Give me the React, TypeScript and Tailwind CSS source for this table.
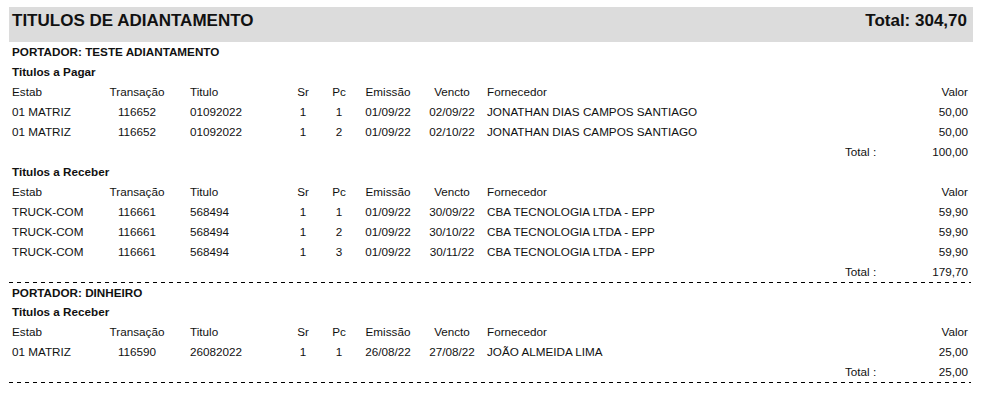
import React from 'react';

type Row = {
  estab: string;
  transacao: string;
  titulo: string;
  sr: string;
  pc: string;
  emissao: string;
  vencto: string;
  fornecedor: string;
  valor: string;
};

type Group = { label: string; rows: Row[]; total: string };
type Portador = { name: string; groups: Group[] };

const portadores: Portador[] = [
  {
    name: 'TESTE ADIANTAMENTO',
    groups: [
      {
        label: 'Titulos a Pagar',
        total: '100,00',
        rows: [
          { estab: '01 MATRIZ', transacao: '116652', titulo: '01092022', sr: '1', pc: '1', emissao: '01/09/22', vencto: '02/09/22', fornecedor: 'JONATHAN DIAS CAMPOS SANTIAGO', valor: '50,00' },
          { estab: '01 MATRIZ', transacao: '116652', titulo: '01092022', sr: '1', pc: '2', emissao: '01/09/22', vencto: '02/10/22', fornecedor: 'JONATHAN DIAS CAMPOS SANTIAGO', valor: '50,00' },
        ],
      },
      {
        label: 'Titulos a Receber',
        total: '179,70',
        rows: [
          { estab: 'TRUCK-COM', transacao: '116661', titulo: '568494', sr: '1', pc: '1', emissao: '01/09/22', vencto: '30/09/22', fornecedor: 'CBA TECNOLOGIA LTDA - EPP', valor: '59,90' },
          { estab: 'TRUCK-COM', transacao: '116661', titulo: '568494', sr: '1', pc: '2', emissao: '01/09/22', vencto: '30/10/22', fornecedor: 'CBA TECNOLOGIA LTDA - EPP', valor: '59,90' },
          { estab: 'TRUCK-COM', transacao: '116661', titulo: '568494', sr: '1', pc: '3', emissao: '01/09/22', vencto: '30/11/22', fornecedor: 'CBA TECNOLOGIA LTDA - EPP', valor: '59,90' },
        ],
      },
    ],
  },
  {
    name: 'DINHEIRO',
    groups: [
      {
        label: 'Titulos a Receber',
        total: '25,00',
        rows: [
          { estab: '01 MATRIZ', transacao: '116590', titulo: '26082022', sr: '1', pc: '1', emissao: '26/08/22', vencto: '27/08/22', fornecedor: 'JOÃO ALMEIDA LIMA', valor: '25,00' },
        ],
      },
    ],
  },
];

const gridCols = 'grid grid-cols-[85px_80px_108px_36px_36px_62px_66px_1fr_80px] h-[20px] leading-[20px]';

const TableRow = ({ row }: { row: Row }) => (
  <div className={gridCols}>
    <span>{row.estab}</span>
    <span className="text-center">{row.transacao}</span>
    <span className="pl-[13px]">{row.titulo}</span>
    <span className="text-center">{row.sr}</span>
    <span className="text-center">{row.pc}</span>
    <span className="text-center">{row.emissao}</span>
    <span className="text-center">{row.vencto}</span>
    <span className="pl-[2px] whitespace-nowrap">{row.fornecedor}</span>
    <span className="text-right">{row.valor}</span>
  </div>
);

const Dashes = () => (
  <div className="-ml-[3px] -mr-[3px] h-px bg-[repeating-linear-gradient(to_right,#000_0_4px,transparent_4px_8px)]" />
);

export default function App() {
  return (
    <div className="min-h-screen bg-white pl-[9px] pr-[8px] pt-[7px] text-[#111] font-['Liberation_Sans',Arial,sans-serif] text-[11.7px]">
      <div className="flex h-[35px] items-start justify-between bg-[#dcdcdc] pl-[3px] pr-[6px] pt-[3px] text-[17px] font-bold leading-[21px]">
        <span>TITULOS DE ADIANTAMENTO</span>
        <span>Total: 304,70</span>
      </div>

      <div className="pl-[3px] pr-[5px]">
        {portadores.map((p, pi) => (
          <div key={p.name}>
            <div className={`font-bold leading-[20px] ${pi === 0 ? 'h-[20px]' : 'h-[19px]'}`}>PORTADOR: {p.name}</div>
            {p.groups.map((g, gi) => (
              <div key={gi}>
                <div className="h-[20px] font-bold leading-[20px]">{g.label}</div>
                <div className={gridCols}>
                  <span>Estab</span>
                  <span className="text-center">Transação</span>
                  <span className="pl-[13px]">Titulo</span>
                  <span className="text-center">Sr</span>
                  <span className="text-center">Pc</span>
                  <span className="text-center">Emissão</span>
                  <span className="text-center">Vencto</span>
                  <span className="pl-[2px]">Fornecedor</span>
                  <span className="text-right">Valor</span>
                </div>
                {g.rows.map((r, ri) => (
                  <TableRow key={ri} row={r} />
                ))}
                <div className="flex h-[20px] justify-end leading-[20px]">
                  <span className="w-[43px]">Total :</span>
                  <span className="w-[80px] text-right">{g.total}</span>
                </div>
              </div>
            ))}
            <Dashes />
          </div>
        ))}
      </div>
    </div>
  );
}
